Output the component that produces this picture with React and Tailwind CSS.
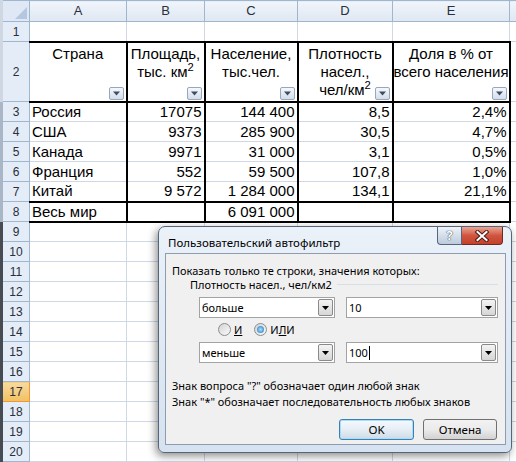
import React from 'react'

const DATA = [
  ['Россия', '17075', '144 400', '8,5', '2,4%'],
  ['США', '9373', '285 900', '30,5', '4,7%'],
  ['Канада', '9971', '31 000', '3,1', '0,5%'],
  ['Франция', '552', '59 500', '107,8', '1,0%'],
  ['Китай', '9 572', '1 284 000', '134,1', '21,1%'],
]

const HEADS = [
  ['Страна'],
  ['Площадь,', <>тыс. км<sup>2</sup></>],
  ['Население,', 'тыс.чел.'],
  ['Плотность', 'насел.,', <>чел/км<sup>2</sup></>],
  ['Доля в % от', 'всего населения'],
]

const EMPTY_ROWS = [9, 10, 11, 12, 13, 14, 15, 16, 17, 18, 19, 20]

function FilterButton() {
  return (
    <span className="absolute bottom-[1px] right-[2px] flex h-[13px] w-[15px] items-center justify-center rounded-[2px] border border-[#97a8be] bg-linear-to-b from-[#f6f8fc] to-[#d5deea]">
      <svg width="7" height="5" viewBox="0 0 7 5">
        <path d="M0 0.5h7L3.5 4.5z" fill="#3c4d66" />
      </svg>
    </span>
  )
}

function RowHead({ n, strip }) {
  const active = n === 17
  return (
    <td
      className={`border border-[#9eb6ce] border-l-[3px] p-0 text-center text-[12px] text-[#27303c] ${strip} ${
        active ? 'border-[#f29536] bg-linear-to-b from-[#f9d99f] to-[#f1c15f]' : 'bg-[#e4ecf7]'
      }`}
    >
      {n}
    </td>
  )
}

function Combo({ value, width, caret }) {
  return (
    <div className={`flex h-[21px] border border-[#a3a3a3] bg-white ${width}`}>
      <div className="flex flex-1 items-center pl-[2px] text-black">
        {value}
        {caret && <span className="ml-px h-[14px] w-px bg-black" />}
      </div>
      <div className="m-px flex w-[15px] items-center justify-center rounded-[2px] border border-[#8a8a8a] bg-linear-to-b from-[#f4f4f4] to-[#d6d6d6]">
        <svg width="7" height="4" viewBox="0 0 7 4">
          <path d="M0 0h7L3.5 4z" fill="#000" />
        </svg>
      </div>
    </div>
  )
}

function Radio({ checked }) {
  return (
    <span className="flex h-[13px] w-[13px] items-center justify-center rounded-full border border-[#8b8c8c] bg-linear-to-br from-[#d4d4d4] to-[#fafafa]">
      {checked && <span className="h-[7px] w-[7px] rounded-full bg-radial from-[#a7e3ff] to-[#1b6fbf]" />}
    </span>
  )
}

function Dialog() {
  return (
    <div className="absolute left-[158px] top-[226px] flex h-[227px] w-[354px] flex-col rounded-t-[7px] rounded-b-[6px] border border-[#56667a] bg-linear-to-b from-[#eaf1f9] to-[#d6e2ef] font-['Noto_Sans',sans-serif] text-[11px] shadow-[-2px_3px_8px_rgba(0,0,0,0.45)]">
      <div className="flex h-[26px] items-start justify-between pl-[9px] pr-[8px]">
        <span className="mt-[9px] text-[11.5px] leading-[14px] text-black">Пользовательский автофильтр</span>
        <div className="flex">
          <div className="flex h-[18px] w-[25px] items-center justify-center rounded-bl-[4px] border border-t-0 border-[#56667a] bg-linear-to-b from-[#eef3f9] to-[#bccbdd] text-[13px] font-bold leading-none text-white [text-shadow:0_0_1px_#2d3a4a,0_0_1px_#2d3a4a]">
            ?
          </div>
          <div className="flex h-[18px] w-[41px] items-center justify-center rounded-br-[4px] border border-l-0 border-t-0 border-[#6b2a22] bg-linear-to-b from-[#eaa495] via-[#d0553f] to-[#c4402b]">
            <svg width="14" height="12" viewBox="0 0 14 12">
              <path d="M2.5 2l9 8M11.5 2l-9 8" stroke="#4a1a14" strokeWidth="4" strokeLinecap="square" />
              <path d="M2.5 2l9 8M11.5 2l-9 8" stroke="#fff" strokeWidth="2" strokeLinecap="square" />
            </svg>
          </div>
        </div>
      </div>
      <div className="mb-[7px] ml-[6px] mr-[5px] flex flex-1 flex-col border border-[#8d9cb0] bg-[#f0f0f0] pt-[11px] leading-[12px] text-black">
        <div className="pl-[6px]">Показать только те строки, значения которых:</div>
        <div className="mt-px flex items-center pl-[24px] pr-[7px] leading-[13px]">
          <span>Плотность насел., чел/км2</span>
          <span className="ml-[5px] h-px flex-1 bg-[#d5dfe5]" />
        </div>
        <div className="mt-[6px] flex gap-[11px] pl-[33px]">
          <Combo value="больше" width="w-[136px]" />
          <Combo value="10" width="w-[152px]" />
        </div>
        <div className="mt-[5px] flex h-[13px] items-center pl-[52px]">
          <Radio />
          <span className="ml-[3px]">
            <u>И</u>
          </span>
          <span className="ml-[12px]">
            <Radio checked />
          </span>
          <span className="ml-[3px]">
            И<u>Л</u>И
          </span>
        </div>
        <div className="mt-[6px] flex gap-[11px] pl-[33px]">
          <Combo value="меньше" width="w-[136px]" />
          <Combo value="100" width="w-[152px]" caret />
        </div>
        <div className="mt-[15px] pl-[6px] leading-[16px]">
          <div>Знак вопроса "?" обозначает один любой знак</div>
          <div>Знак "*" обозначает последовательность любых знаков</div>
        </div>
        <div className="mt-[9px] flex justify-end gap-[9px] pr-[8px]">
          <button className="h-[21px] w-[75px] rounded-[3px] border border-[#3c7fb1] bg-linear-to-b from-[#f4f9fd] via-[#e6eef5] to-[#cddbe7] text-[11.5px] shadow-[inset_0_0_0_1px_#a9dcf6]">
            OK
          </button>
          <button className="h-[21px] w-[74px] rounded-[3px] border border-[#707070] bg-linear-to-b from-[#f2f2f2] via-[#ebebeb] to-[#d2d2d2] text-[11.5px]">
            Отмена
          </button>
        </div>
      </div>
    </div>
  )
}

export default function App() {
  const thin = 'border border-[#d0d7e5]'
  return (
    <div className="relative h-[462px] w-[516px] overflow-hidden bg-white font-['Liberation_Sans',Arial,sans-serif] text-black">
      <table className="w-[580px] table-fixed border-collapse">
        <colgroup>
          <col className="w-[28px]" />
          <col className="w-[97px]" />
          <col className="w-[78px]" />
          <col className="w-[93px]" />
          <col className="w-[95px]" />
          <col className="w-[117px]" />
          <col className="w-[72px]" />
        </colgroup>
        <thead>
          <tr className="h-[21px]">
            <th className="relative border border-l-[3px] border-[#9eb6ce] border-l-[#cfd7e2] bg-[#dfe8f4] p-0">
              <svg className="absolute bottom-[2px] right-[2px]" width="12" height="12" viewBox="0 0 12 12">
                <path d="M12 0v12H0z" fill="#b4c7df" />
              </svg>
            </th>
            {['A', 'B', 'C', 'D', 'E', ''].map((c, i) => (
              <th
                key={i}
                className="border border-[#9eb6ce] bg-linear-to-b from-[#f1f5fb] to-[#dfe7f2] p-0 text-[13px] font-normal text-[#27303c]"
              >
                {c}
              </th>
            ))}
          </tr>
        </thead>
        <tbody className="text-[15px]">
          <tr className="h-[20px]">
            <RowHead n={1} strip="border-l-[#cfd7e2]" />
            {[0, 1, 2, 3, 4, 5].map((i) => (
              <td key={i} className={thin} />
            ))}
          </tr>
          <tr className="h-[60px]">
            <RowHead n={2} strip="border-l-[#cfd7e2]" />
            {HEADS.map((lines, i) => (
              <td
                key={i}
                className={`relative border-y-2 border-r-2 border-black p-0 align-top ${
                  i === 0 ? 'border-l border-l-[#d0d7e5]' : 'border-l-2'
                }`}
              >
                <div className="flex h-[58px] flex-col items-center pt-[2px] leading-[18px]">
                  {lines.map((l, j) => (
                    <div key={j} className="whitespace-nowrap">
                      {l}
                    </div>
                  ))}
                </div>
                <FilterButton />
              </td>
            ))}
            <td className={`${thin} align-bottom`} />
          </tr>
          {DATA.map((row, r) => (
            <tr key={r} className="h-[20px]">
              <RowHead n={r + 3} strip="border-l-[#a9b6c6]" />
              {row.map((v, i) => (
                <td
                  key={i}
                  className={`${thin} border-r-2 border-r-black px-[2px] py-0 leading-[18px] whitespace-nowrap ${
                    i === 0 ? 'text-left' : 'text-right border-l-2 border-l-black'
                  } ${r === 4 ? 'border-b-2 border-b-black' : ''}`}
                >
                  {v}
                </td>
              ))}
              <td className={thin} />
            </tr>
          ))}
          <tr className="h-[20px]">
            <RowHead n={8} strip="border-l-[#a9b6c6]" />
            {['Весь мир', '', '6 091 000', '', ''].map((v, i) => (
              <td
                key={i}
                className={`${thin} border-y-2 border-r-2 border-y-black border-r-black px-[2px] py-0 leading-[18px] whitespace-nowrap ${
                  i === 0 ? 'text-left' : 'text-right border-l-2 border-l-black'
                }`}
              >
                {v}
              </td>
            ))}
            <td className={thin} />
          </tr>
          {EMPTY_ROWS.map((n) => (
            <tr key={n} className="h-[20px]">
              <RowHead n={n} strip="border-l-[#474c52]" />
              {[0, 1, 2, 3, 4, 5].map((i) => (
                <td key={i} className={thin} />
              ))}
            </tr>
          ))}
        </tbody>
      </table>
      <Dialog />
    </div>
  )
}
